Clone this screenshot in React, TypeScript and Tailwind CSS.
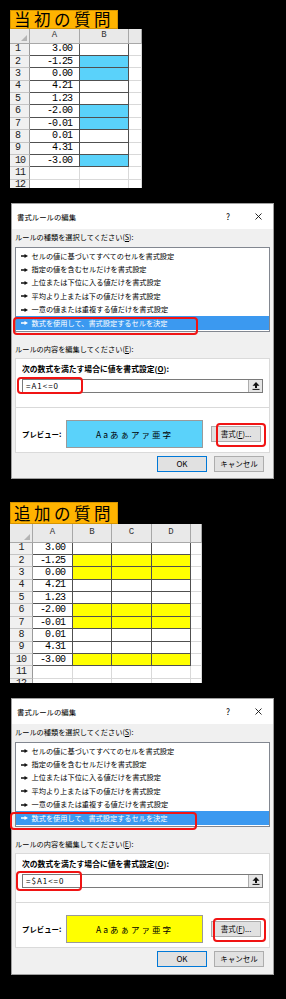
import { JSX } from 'react'

const values = ['3.00', '-1.25', '0.00', '4.21', '1.23', '-2.00', '-0.01', '0.01', '4.31', '-3.00']
const isHit = (v: string) => parseFloat(v) <= 0

const rules = [
  'セルの値に基づいてすべてのセルを書式設定',
  '指定の値を含むセルだけを書式設定',
  '上位または下位に入る値だけを書式設定',
  '平均より上または下の値だけを書式設定',
  '一意の値または重複する値だけを書式設定',
  '数式を使用して、書式設定するセルを決定',
]

const jp = "font-['Noto_Sans_CJK_JP',sans-serif]"

const Heading = ({ text, className }: { text: string; className: string }): JSX.Element => (
  <div className={`ml-[10px] w-[108px] bg-[#ffb300] border border-[#d69400] flex items-center pl-[3px] ${className}`}>
    <span className="text-[16.5px] leading-none tracking-[3.5px] text-black font-['Noto_Sans_CJK_JP',serif]">{text}</span>
  </div>
)

type SheetProps = {
  layout: string
  letters: string[]
  fillCount: number
  fill: string
  labelClass: string
}

const Sheet = ({ layout, letters, fillCount, fill, labelClass }: SheetProps): JSX.Element => {
  const rows = Array.from({ length: 12 }, (_, i) => i + 1)
  return (
    <div className={`ml-[10px] bg-white overflow-hidden grid ${layout}`}>
      <div className="bg-[#e9e9e9] border-r border-b border-[#a8a8a8] flex items-end justify-end p-[2px]">
        <svg width="6" height="6" viewBox="0 0 6 6">
          <path d="M6 0V6H0Z" fill="#b4b4b4" />
        </svg>
      </div>
      {letters.map((l, i) => (
        <div
          key={'h' + i}
          className="bg-[#e9e9e9] border-r border-b border-[#a8a8a8] flex items-center justify-center text-[9px] leading-none text-[#333] font-['Liberation_Mono',monospace]"
        >
          {l}
        </div>
      ))}
      {rows.map((r) => {
        const v = values[r - 1]
        const hit = r <= 10 && isHit(v)
        return [
          <div
            key={'r' + r}
            className={`bg-[#f0f0f0] border-r border-b border-[#c4c4c4] flex items-center text-[10px] leading-none tracking-[-1px] text-[#222] font-['Liberation_Mono',monospace] ${labelClass}`}
            style={{ borderRightColor: '#9a9a9a' }}
          >
            {r}
          </div>,
          ...letters.map((_, i) => {
            const inData = r <= 10 && i <= fillCount
            const border = inData ? 'border-[#505050]' : 'border-[#d9d9d9]'
            if (i === 0) {
              return (
                <div
                  key={r + '-' + i}
                  className={`border-r border-b ${border} flex items-center justify-end pr-[7px] text-[10px] leading-none tracking-[-1px] text-black font-['Liberation_Mono',monospace]`}
                >
                  {r <= 10 ? v : ''}
                </div>
              )
            }
            return <div key={r + '-' + i} className={`border-r border-b ${border} ${inData && hit ? fill : ''}`} />
          }),
        ]
      })}
    </div>
  )
}

const Arrow = ({ color }: { color: string }): JSX.Element => (
  <svg width="7" height="4" viewBox="0 0 7 4" className="shrink-0">
    <path d="M0 1.3H3.5V0L7 2L3.5 4V2.7H0Z" fill={color} />
  </svg>
)

type DialogProps = {
  formula: string
  preview: string
  listRing: string
  formulaRing: string
  formatRing: string
  className: string
}

const Dialog = ({ formula, preview, listRing, formulaRing, formatRing, className }: DialogProps): JSX.Element => (
  <div className={`relative ml-[11px] w-[263px] border border-[#a0a0a0] bg-[#f0f0f0] text-black ${jp} ${className}`}>
    <div className="h-[25px] bg-white flex items-center pl-[5px]">
      <span className="text-[7.4px] leading-none">書式ルールの編集</span>
      <div className="ml-auto flex items-center pr-[11px]">
        <span className="w-[10px] text-center text-[8.5px] leading-none">?</span>
        <svg width="7" height="7" viewBox="0 0 7 7" className="ml-[22px]">
          <path d="M0.5 0.5L6.5 6.5M6.5 0.5L0.5 6.5" stroke="#111" strokeWidth="0.9" />
        </svg>
      </div>
    </div>

    <div className="px-[3px] pt-[4px]">
      <div className="h-[10px] flex items-center text-[7.2px] leading-none">
        ルールの種類を選択してください(<span className="underline">S</span>):
      </div>
      <div className="mt-[4px] h-[85px] bg-white border border-[#828790] pt-[1.5px]">
        {rules.map((r, i) => {
          const sel = i === rules.length - 1
          return (
            <div
              key={r}
              className={`h-[13.4px] flex items-center gap-[3.5px] pl-[5px] text-[7.2px] leading-none ${sel ? 'bg-[#3b99f0] text-white' : ''}`}
            >
              <Arrow color={sel ? '#fff' : '#111'} />
              {r}
            </div>
          )
        })}
      </div>

      <div className="mt-[13px] h-[10px] flex items-center text-[7.2px] leading-none">
        ルールの内容を編集してください(<span className="underline">E</span>):
      </div>
      <div className="mt-[3px] h-[95px] bg-white border border-[#dadada] pt-[5px]">
        <div className="h-[10px] flex items-center pl-[6px] text-[7.8px] font-bold leading-none">
          次の数式を満たす場合に値を書式設定(<span className="underline">O</span>):
        </div>
        <div className="mt-[5px] mx-[6px] h-[14px] border border-[#7a7a7a] flex items-center">
          <span className="pl-[3px] text-[8px] tracking-[1px] leading-none">{formula}</span>
          <div className="ml-auto h-full w-[14px] border-l border-[#adadad] bg-[#e6e6e6] flex items-center justify-center">
            <svg width="8" height="8" viewBox="0 0 8 8">
              <path d="M4 0L7.5 3.8H5V6H3V3.8H0.5Z" fill="#111" />
              <path d="M0.5 7.4H7.5" stroke="#111" strokeWidth="1" />
            </svg>
          </div>
        </div>
        <div className="mt-[14px] h-px bg-[#d9d9d9]" />
        <div className="mt-[12px] flex items-center pl-[6px]">
          <span className="w-[44px] text-[7.4px] font-bold leading-none">プレビュー:</span>
          <div
            className={`w-[137px] h-[28px] border border-[#9a9a9a] flex items-center justify-center text-[8.5px] tracking-[2px] leading-none ${preview}`}
          >
            Aaあぁアァ亜字
          </div>
          <div className="ml-[8px] w-[50px] h-[16px] bg-[#e1e1e1] border border-[#adadad] flex items-center justify-center text-[7.5px] leading-none">
            書式(<span className="underline">F</span>)...
          </div>
        </div>
      </div>

      <div className="mt-[3px] flex justify-end gap-[7px] pr-[6px] pb-[7px]">
        <div className="w-[50px] h-[16px] bg-[#e1e1e1] border border-[#0078d7] flex items-center justify-center text-[8px] leading-none">
          OK
        </div>
        <div className="w-[50px] h-[16px] bg-[#e1e1e1] border border-[#adadad] flex items-center justify-center text-[7.5px] leading-none">
          キャンセル
        </div>
      </div>
    </div>

    <div className={`absolute border-2 border-[#f01414] rounded-[4px] ${listRing}`} />
    <div className={`absolute border-2 border-[#f01414] rounded-[4px] ${formulaRing}`} />
    <div className={`absolute border-2 border-[#f01414] rounded-[4px] ${formatRing}`} />
  </div>
)

export default function App(): JSX.Element {
  return (
    <div className="w-[286px] h-[999px] bg-black pt-[10px] overflow-hidden">
      <Heading text="当初の質問" className="h-[19px]" />
      <Sheet
        layout="w-[132px] h-[159px] grid-cols-[20px_50px_49px_13px] grid-rows-[14.5px_repeat(12,12.4px)]"
        letters={['A', 'B', '']}
        fillCount={1}
        fill="bg-[#5ad2fa]"
        labelClass="pl-[5px]"
      />
      <Dialog
        className="mt-[15px] h-[276px]"
        formula="=A1<=0"
        preview="bg-[#5ad2fa]"
        listRing="left-[1px] top-[113px] w-[185px] h-[18px]"
        formulaRing="left-[5px] top-[173px] w-[66px] h-[17px]"
        formatRing="left-[204px] top-[219px] w-[50px] h-[24px]"
      />

      <Heading text="追加の質問" className="mt-[23px] h-[22px]" />
      <Sheet
        layout="w-[192px] h-[159px] grid-cols-[23px_40px_39px_40px_39px_11px] grid-rows-[18.5px_repeat(12,12.4px)]"
        letters={['A', 'B', 'C', 'D', '']}
        fillCount={3}
        fill="bg-[#ffff00]"
        labelClass="justify-center"
      />
      <Dialog
        className="mt-[15px] h-[277px]"
        formula="=$A1<=0"
        preview="bg-[#ffff00]"
        listRing="left-[-2px] top-[113px] w-[187px] h-[18px]"
        formulaRing="left-[4px] top-[172px] w-[66px] h-[20px]"
        formatRing="left-[201px] top-[219px] w-[53px] h-[24px]"
      />
    </div>
  )
}
